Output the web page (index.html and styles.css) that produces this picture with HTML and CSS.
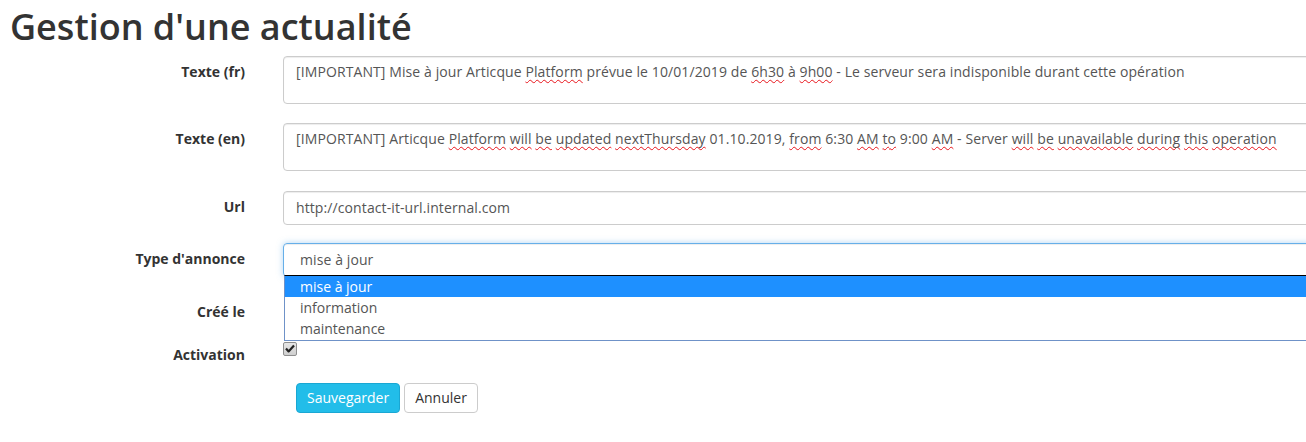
FILE: index.html
```html
<!DOCTYPE html>
<html lang="fr">
<head>
    <meta charset="UTF-8">
    <meta name="viewport" content="width=device-width, initial-scale=1.0">
    <title>Gestion d'une actualité</title>
    <link rel="stylesheet" href="styles.css">
</head>
<body>
  <h1 class="title">Gestion d'une actualité</h1>
  <form class="news-form" name="news-form">
    <div class="form-group group-fr">
        <label class="control-label">Texte (fr)</label>
        <div class="form-control textarea">[IMPORTANT] Mise à jour Articque <span class="typo">Platform</span> prévue le 10/01/2019 de <span class="typo">6h30</span> à <span class="typo">9h00</span> - Le serveur sera indisponible durant cette opération</div>
    </div>

    <div class="form-group group-en">
        <label class="control-label">Texte (en)</label>
        <div class="form-control textarea">[IMPORTANT] Articque <span class="typo">Platform</span> <span class="typo">will</span> <span class="typo">be</span> <span class="typo">updated</span> <span class="typo">nextThursday</span> 01.10.2019, <span class="typo">from</span> 6:30 <span class="typo">AM</span> <span class="typo">to</span> 9:00 <span class="typo">AM</span> - Server <span class="typo">will</span> <span class="typo">be</span> <span class="typo">unavailable</span> <span class="typo">during</span> <span class="typo">this</span> <span class="typo">operation</span></div>
    </div>

    <div class="form-group group-url">
        <label class="control-label">Url</label>
        <div class="form-control input">http://contact-it-url.internal.com</div>
    </div>

    <div class="form-group group-type">
        <label class="control-label">Type d'annonce</label>
        <div class="select-wrap">
            <div class="form-control select">mise à jour</div>
            <ul class="dropdown">
                <li class="option selected">mise à jour</li>
                <li class="option">information</li>
                <li class="option">maintenance</li>
            </ul>
        </div>
    </div>

    <div class="form-group group-date">
        <label class="control-label">Créé le</label>
        <div class="static"></div>
    </div>

    <div class="form-group group-active">
        <label class="control-label">Activation</label>
        <div class="check-wrap">
            <span class="checkbox">
                <svg width="10" height="9" viewBox="0 0 10 9"><path d="M1 4.6 L3.6 7.4 L9 1.4" fill="none" stroke="#222" stroke-width="2.2" stroke-linejoin="round"/></svg>
            </span>
        </div>
    </div>

    <div class="actions">
        <button type="submit" class="btn btn-save">Sauvegarder</button>
        <button type="button" class="btn btn-cancel">Annuler</button>
    </div>
  </form>
</body>
</html>
```

FILE: styles.css
```css
body {
    margin: 0;
    font-family: "Open Sans", "Noto Sans", sans-serif;
    font-size: 14px;
    line-height: 20px;
    color: #333;
    background: #fff;
    overflow: hidden;
}
.title {
    font-size: 36px;
    font-weight: 600;
    line-height: 1.1;
    margin: 7px 0 9px 10px;
    color: #333;
}
.news-form {
    margin: 0;
}
.form-group {
    display: grid;
    grid-template-columns: 245px 1100px;
    column-gap: 38px;
}
.control-label {
    font-weight: 700;
    text-align: right;
    padding-top: 6px;
}
.form-control {
    box-sizing: border-box;
    border: 1px solid #ccc;
    border-radius: 4px;
    box-shadow: inset 0 1px 1px rgba(0,0,0,.075);
    color: #555;
    padding: 6px 12px;
    white-space: nowrap;
    letter-spacing: 0.1px;
}
.textarea {
    height: 48px;
    padding-top: 5px;
}
.input {
    height: 34px;
}
.group-fr {
    margin-bottom: 19px;
}
.group-en {
    margin-bottom: 20px;
}
.group-url {
    margin-bottom: 18px;
}
.group-type {
    margin-bottom: 19px;
}
.group-date {
    margin-bottom: 9px;
}
.group-active {
    margin-bottom: 18px;
}
.typo {
    text-decoration: underline wavy #e8141b;
    text-decoration-thickness: 1px;
    text-decoration-skip-ink: none;
    text-underline-offset: 2px;
}
.select-wrap {
    position: relative;
}
.select {
    height: 34px;
    padding-left: 16px;
    border-color: #66afe9;
    box-shadow: inset 0 1px 1px rgba(0,0,0,.075), 0 0 6px rgba(102,175,233,.5);
}
.dropdown {
    position: absolute;
    top: 32px;
    left: 1px;
    right: -20px;
    margin: 0;
    padding: 0 0 1px;
    list-style: none;
    background: #fff;
    border: 1px solid #6f92c8;
    border-top-color: #000;
    z-index: 2;
}
.option {
    height: 21px;
    line-height: 21px;
    padding-left: 15px;
    color: #555;
}
.option.selected {
    background: #1e90ff;
    color: #fff;
}
.static {
    height: 34px;
}
.check-wrap {
    padding-top: 3px;
}
.checkbox {
    display: flex;
    align-items: center;
    justify-content: center;
    box-sizing: border-box;
    width: 14px;
    height: 14px;
    border: 1px solid #8e8e8e;
    border-radius: 2px;
    background: linear-gradient(#e6e6e6, #cfcfcf);
}
.actions {
    padding-left: 296px;
    display: flex;
    gap: 4px;
}
.btn {
    font-family: inherit;
    font-size: 14px;
    line-height: 20px;
    height: 30px;
    padding: 4px 10px;
    border-radius: 4px;
    border: 1px solid #ccc;
    background: #fff;
    color: #333;
    cursor: pointer;
}
.btn-save {
    background: #22bde9;
    border-color: #1aa7d3;
    color: #fff;
}
```
